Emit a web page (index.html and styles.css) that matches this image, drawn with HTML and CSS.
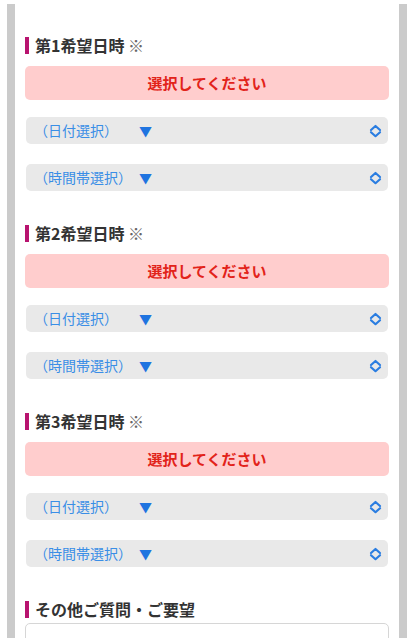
FILE: index.html
```html
<!DOCTYPE html>
<html lang="ja">
<head>
    <meta charset="UTF-8">
    <meta name="viewport" content="width=device-width, initial-scale=1.0">
    <title>ご予約フォーム</title>
    <link rel="stylesheet" href="styles.css">
</head>
<body>
    <div class="frame">
        <form class="reserve-form">
            <div class="field">
                <h2 class="field-title">第1希望日時 <span class="req">※</span></h2>
                <p class="alert">選択してください</p>
                <div class="pick">
                    <span class="pick-label"><span class="pick-text">（日付選択）　</span><span class="arrow">▼</span></span>
                    <svg class="chev" width="13" height="14" viewBox="0 0 13 14"><path d="M2 6L6.5 2L11 6M2 8.2L6.5 12.2L11 8.2" fill="none" stroke="currentColor" stroke-width="2.2" stroke-linecap="round" stroke-linejoin="round"/></svg>
                </div>
                <div class="pick">
                    <span class="pick-label"><span class="pick-text">（時間帯選択）</span><span class="arrow">▼</span></span>
                    <svg class="chev" width="13" height="14" viewBox="0 0 13 14"><path d="M2 6L6.5 2L11 6M2 8.2L6.5 12.2L11 8.2" fill="none" stroke="currentColor" stroke-width="2.2" stroke-linecap="round" stroke-linejoin="round"/></svg>
                </div>
            </div>

            <div class="field">
                <h2 class="field-title">第2希望日時 <span class="req">※</span></h2>
                <p class="alert">選択してください</p>
                <div class="pick">
                    <span class="pick-label"><span class="pick-text">（日付選択）　</span><span class="arrow">▼</span></span>
                    <svg class="chev" width="13" height="14" viewBox="0 0 13 14"><path d="M2 6L6.5 2L11 6M2 8.2L6.5 12.2L11 8.2" fill="none" stroke="currentColor" stroke-width="2.2" stroke-linecap="round" stroke-linejoin="round"/></svg>
                </div>
                <div class="pick">
                    <span class="pick-label"><span class="pick-text">（時間帯選択）</span><span class="arrow">▼</span></span>
                    <svg class="chev" width="13" height="14" viewBox="0 0 13 14"><path d="M2 6L6.5 2L11 6M2 8.2L6.5 12.2L11 8.2" fill="none" stroke="currentColor" stroke-width="2.2" stroke-linecap="round" stroke-linejoin="round"/></svg>
                </div>
            </div>

            <div class="field">
                <h2 class="field-title">第3希望日時 <span class="req">※</span></h2>
                <p class="alert">選択してください</p>
                <div class="pick">
                    <span class="pick-label"><span class="pick-text">（日付選択）　</span><span class="arrow">▼</span></span>
                    <svg class="chev" width="13" height="14" viewBox="0 0 13 14"><path d="M2 6L6.5 2L11 6M2 8.2L6.5 12.2L11 8.2" fill="none" stroke="currentColor" stroke-width="2.2" stroke-linecap="round" stroke-linejoin="round"/></svg>
                </div>
                <div class="pick">
                    <span class="pick-label"><span class="pick-text">（時間帯選択）</span><span class="arrow">▼</span></span>
                    <svg class="chev" width="13" height="14" viewBox="0 0 13 14"><path d="M2 6L6.5 2L11 6M2 8.2L6.5 12.2L11 8.2" fill="none" stroke="currentColor" stroke-width="2.2" stroke-linecap="round" stroke-linejoin="round"/></svg>
                </div>
            </div>

            <div class="field">
                <h2 class="field-title">その他ご質問・ご要望</h2>
                <textarea class="memo" rows="5"></textarea>
            </div>
        </form>
    </div>
</body>
</html>
```

FILE: styles.css
```css
body {
    margin: 0;
    padding: 0;
    background: #fff;
    font-family: "Noto Sans CJK JP", "Noto Sans", sans-serif;
    color: #333;
}

.frame {
    margin: 4px 7px 0;
    border-left: 8px solid #cbcbcb;
    border-right: 8px solid #cbcbcb;
    padding: 33px 10px 40px;
    min-height: 700px;
}

.field {
    margin-bottom: 34px;
}

.field-title {
    margin: 0;
    border-left: 4px solid #b8136f;
    padding-left: 6px;
    font-size: 16px;
    line-height: 17px;
    font-weight: bold;
    color: #333;
}

.req {
    font-weight: normal;
    color: #666;
}

.alert {
    margin: 12px 0 0;
    height: 34px;
    line-height: 34px;
    background: #ffcdcd;
    border-radius: 5px;
    text-align: center;
    font-size: 15px;
    font-weight: bold;
    color: #e2231a;
}

.pick {
    display: flex;
    align-items: center;
    justify-content: space-between;
    margin: 17px 1px 0;
    height: 27px;
    padding: 0 6px 0 8px;
    background: #e9e9e9;
    border-radius: 5px;
}

.pick + .pick {
    margin-top: 20px;
}

.pick-label {
    font-size: 14px;
    line-height: 27px;
    color: #3a8ee6;
    white-space: nowrap;
}

.pick-text {
    display: inline-block;
    min-width: 98px;
}

.arrow {
    margin-left: 7px;
    font-size: 13px;
    color: #1f74e0;
}

.chev {
    flex-shrink: 0;
    color: #2a7de1;
}

.memo {
    display: block;
    box-sizing: border-box;
    width: 100%;
    margin-top: 5px;
    height: 100px;
    border: 1px solid #d6d6d6;
    border-radius: 5px;
    background: #fff;
    resize: none;
}
```
